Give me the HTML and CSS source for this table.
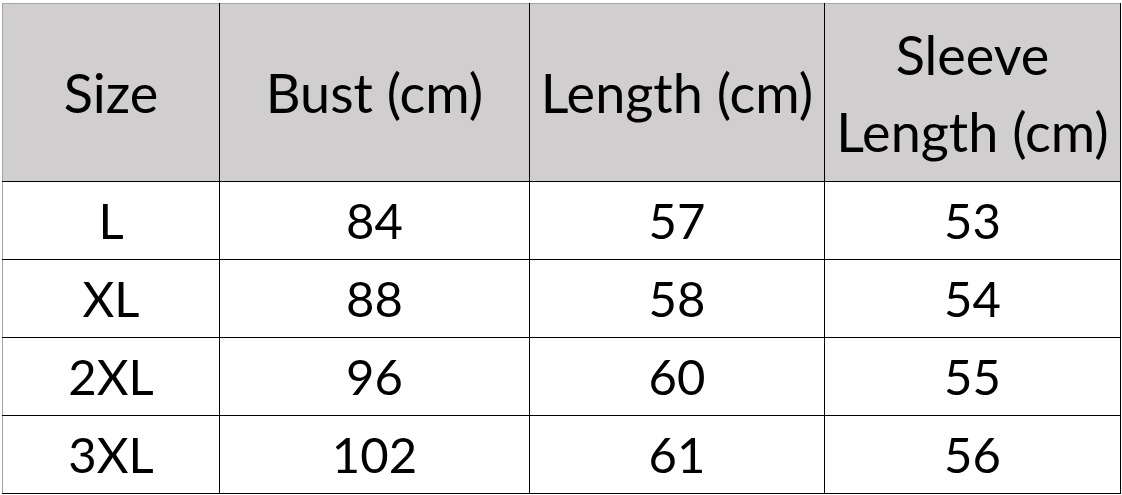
FILE: index.html
```html
<!DOCTYPE html>
<html>
<head>
<meta charset="utf-8">
<link rel="stylesheet" href="styles.css">
</head>
<body>
<table class="size-table">
  <colgroup>
    <col class="c1"><col class="c2"><col class="c3"><col class="c4">
  </colgroup>
  <thead>
    <tr class="head">
      <th>Size</th>
      <th>Bust (cm)</th>
      <th>Length (cm)</th>
      <th class="two">Sleeve<br>Length (cm)</th>
    </tr>
  </thead>
  <tbody>
    <tr><td>L</td><td>84</td><td>57</td><td>53</td></tr>
    <tr><td>XL</td><td>88</td><td>58</td><td>54</td></tr>
    <tr><td>2XL</td><td>96</td><td>60</td><td>55</td></tr>
    <tr><td>3XL</td><td>102</td><td>61</td><td>56</td></tr>
  </tbody>
</table>
</body>
</html>
```
FILE: styles.css
```css
html, body {
  margin: 0;
  padding: 0;
  background: #ffffff;
}
body {
  padding: 3px 0 0 2px;
}
.size-table {
  border-collapse: collapse;
  table-layout: fixed;
  width: 1118px;
  font-family: Lato, "Liberation Sans", sans-serif;
  font-size: 49px;
  color: #000;
  border-top: 1px solid #a6a6a6;
  border-left: 1px solid #a6a6a6;
}
.c1 { width: 217px; }
.c2 { width: 310px; }
.c3 { width: 295px; }
.c4 { width: 296px; }
.size-table th,
.size-table td {
  border: 1px solid #000;
  padding: 0;
  text-align: center;
  vertical-align: middle;
  font-weight: normal;
}
.size-table thead th {
  border-top: 1px solid #a6a6a6;
}
.size-table tr > :first-child {
  border-left: 1px solid #a6a6a6;
}
.head th {
  background: #d0cece;
  height: 177px;
  font-size: 54px;
  line-height: 77px;
}
.size-table td {
  height: 77px;
  line-height: 77px;
}
```
